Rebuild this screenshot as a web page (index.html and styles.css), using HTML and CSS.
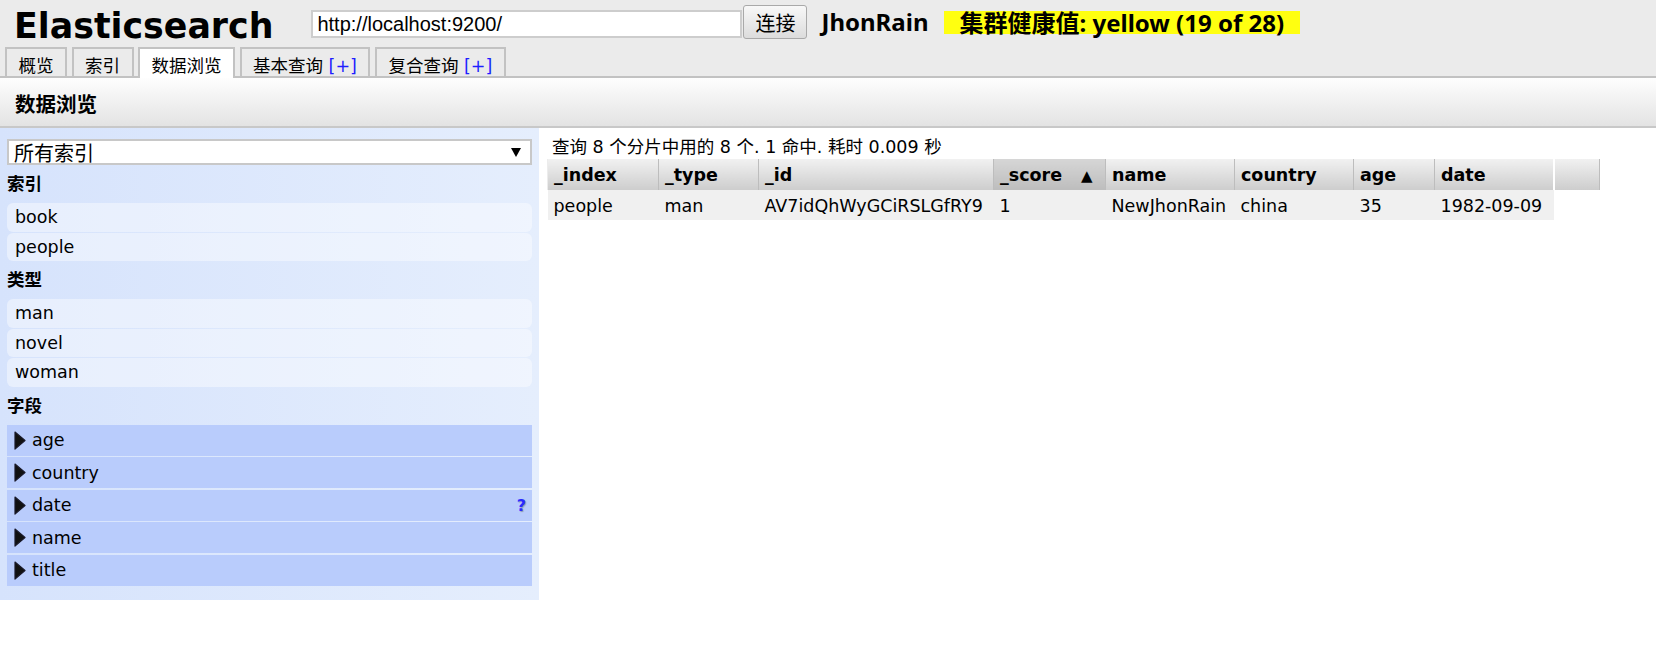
FILE: index.html
```html
<!DOCTYPE html>
<html lang="zh-CN">
<head>
<meta charset="utf-8">
<title>Elasticsearch</title>
<link rel="stylesheet" href="styles.css">
</head>
<body>
<header class="topbar">
  <div class="top-row">
    <h1 class="brand">Elasticsearch</h1>
    <input class="url" type="text" value="http://localhost:9200/">
    <button class="connect-btn" type="button">连接</button>
    <span class="cluster-name">JhonRain</span>
    <span class="health">集群健康值: yellow (19 of 28)</span>
  </div>
  <nav class="tabs">
    <div class="tab">概览</div>
    <div class="tab">索引</div>
    <div class="tab active">数据浏览</div>
    <div class="tab">基本查询 <span class="tab-plus">[+]</span></div>
    <div class="tab">复合查询 <span class="tab-plus">[+]</span></div>
  </nav>
</header>
<div class="page-head"><h2>数据浏览</h2></div>
<div class="browser">
  <aside class="filter">
    <div class="select" role="combobox"><span class="select-text">所有索引</span><svg class="select-arrow" width="10" height="10" viewBox="0 0 10 10"><polygon points="0,1 10,1 5,10" fill="#000"/></svg></div>
    <div class="section-title">索引</div>
    <div class="facet">book</div>
    <div class="facet">people</div>
    <div class="section-title">类型</div>
    <div class="facet">man</div>
    <div class="facet">novel</div>
    <div class="facet">woman</div>
    <div class="section-title">字段</div>
    <div class="field"><svg class="arrow" width="12" height="19" viewBox="0 0 12 19"><path d="M1 1 L11 9.5 L1 18 Z" fill="#111" stroke="#1a1a2a" stroke-width="1.2" stroke-linejoin="round"/></svg><span class="field-name">age</span></div>
    <div class="field"><svg class="arrow" width="12" height="19" viewBox="0 0 12 19"><path d="M1 1 L11 9.5 L1 18 Z" fill="#111" stroke="#1a1a2a" stroke-width="1.2" stroke-linejoin="round"/></svg><span class="field-name">country</span></div>
    <div class="field"><svg class="arrow" width="12" height="19" viewBox="0 0 12 19"><path d="M1 1 L11 9.5 L1 18 Z" fill="#111" stroke="#1a1a2a" stroke-width="1.2" stroke-linejoin="round"/></svg><span class="field-name">date</span><span class="help">?</span></div>
    <div class="field"><svg class="arrow" width="12" height="19" viewBox="0 0 12 19"><path d="M1 1 L11 9.5 L1 18 Z" fill="#111" stroke="#1a1a2a" stroke-width="1.2" stroke-linejoin="round"/></svg><span class="field-name">name</span></div>
    <div class="field"><svg class="arrow" width="12" height="19" viewBox="0 0 12 19"><path d="M1 1 L11 9.5 L1 18 Z" fill="#111" stroke="#1a1a2a" stroke-width="1.2" stroke-linejoin="round"/></svg><span class="field-name">title</span></div>
  </aside>
  <main class="results">
    <div class="summary">查询 8 个分片中用的 8 个. 1 命中. 耗时 0.009 秒</div>
    <table class="grid">
      <colgroup>
        <col class="c-index"><col class="c-type"><col class="c-id"><col class="c-score"><col class="c-name"><col class="c-country"><col class="c-age"><col class="c-date"><col class="c-extra">
      </colgroup>
      <thead>
        <tr>
          <th>_index</th><th>_type</th><th>_id</th><th class="sorted">_score<span class="sort">▲</span></th><th>name</th><th>country</th><th>age</th><th>date</th><th class="extra"></th>
        </tr>
      </thead>
      <tbody>
        <tr>
          <td>people</td><td>man</td><td>AV7idQhWyGCiRSLGfRY9</td><td>1</td><td>NewJhonRain</td><td>china</td><td>35</td><td>1982-09-09</td>
        </tr>
      </tbody>
    </table>
  </main>
</div>
</body>
</html>
```
FILE: styles.css
```css
* { box-sizing: border-box; }

body {
  margin: 0;
  font-family: "DejaVu Sans", "Noto Sans CJK SC", sans-serif;
  font-size: 17.5px;
  color: #000;
  background: #fff;
}

/* ---------- top bar ---------- */
.topbar {
  background: #ebebeb;
  border-bottom: 2px solid #c2c2c2;
  height: 78px;
}

.top-row {
  display: flex;
  align-items: flex-start;
  height: 47px;
}

.brand {
  margin: 6px 38px 0 14px;
  font-size: 34.8px;
  line-height: 40px;
  font-weight: bold;
  white-space: nowrap;
}

.url {
  margin-top: 10px;
  width: 431px;
  height: 28px;
  border: 2px solid #cdcdcd;
  padding: 0 4px;
  font: 20px "Liberation Sans", Arial, sans-serif;
  background: #fff;
  color: #000;
  outline: none;
}

.connect-btn {
  margin: 5px 0 0 1px;
  width: 64px;
  height: 34px;
  border: 1px solid #a9a9a9;
  border-radius: 3px;
  background: linear-gradient(#f8f8f8, #dcdcdc);
  font: 20px "Noto Sans CJK SC", sans-serif;
  padding: 0;
  color: #000;
}

.cluster-name {
  margin: 8px 0 0 14px;
  font: bold 24px/28px "Noto Sans", "Noto Sans CJK SC", sans-serif;
  white-space: nowrap;
}

.health {
  margin: 11px 0 0 16px;
  height: 23px;
  background: #ffff10;
  padding: 0 16px 0 15px;
  font: bold 24px/23px "Noto Sans", "Noto Sans CJK SC", sans-serif;
  white-space: nowrap;
}

/* ---------- tabs ---------- */
.tabs {
  display: flex;
  align-items: flex-end;
  gap: 4.5px;
  height: 29px;
  padding-left: 5px;
}

.tab {
  height: 29px;
  border: 2px solid #c2c2c2;
  border-bottom: 0;
  background: #ebebeb;
  padding: 7px 11.5px 0;
  line-height: 21px;
  font-size: 17.5px;
  white-space: nowrap;
}

.tab.active {
  background: #fff;
  height: 31px;
  margin-bottom: -2px;
}

.tab-plus { color: #1f1fff; }

/* ---------- page heading ---------- */
.page-head {
  height: 50px;
  background: linear-gradient(#fefefe, #e3e3e3);
  border-bottom: 2px solid #c8c8c8;
  padding: 1px 0 0 15px;
  display: flex;
  align-items: center;
}

.page-head h2 {
  margin: 0;
  font-size: 20.5px;
  font-weight: bold;
}

/* ---------- browser ---------- */
.browser {
  display: flex;
  align-items: flex-start;
}

.filter {
  width: 539px;
  flex: none;
  padding: 11px 7px 14.5px;
  background: linear-gradient(to right, #d6e3fc, #e5eefd);
}

.select {
  height: 26px;
  border: 2px solid #c8c8c8;
  background: #fff;
  display: flex;
  align-items: center;
  justify-content: space-between;
  padding: 0 9px 0 5px;
  font-size: 20px;
  overflow: hidden;
}

.select-text {
  line-height: 22px;
  padding-top: 3px;
}

.section-title {
  margin: 5px 0 5px;
  height: 28px;
  line-height: 28px;
  font-weight: bold;
  font-size: 17.5px;
}

.facet {
  height: 28.5px;
  line-height: 28.5px;
  padding-left: 8px;
  margin-bottom: 1px;
  background: rgba(255, 255, 255, 0.42);
  border-radius: 6px;
}

.field {
  height: 31px;
  margin-bottom: 1.6px;
  background: #b9ccfc;
  display: flex;
  align-items: center;
  padding: 0 6px 0 7px;
}

.field:last-child { margin-bottom: 0; }

.field .arrow {
  flex: none;
  margin-right: 6px;
}

.field-name { flex: 1; }

.help {
  color: #2a2aff;
  font-weight: bold;
  font-size: 16px;
  text-shadow: 1px 1px 1px #8f9ab5;
}

/* ---------- results ---------- */
.results {
  flex: 1;
  padding: 9px 0 0 8px;
}

.summary {
  margin: 0 0 2px 5px;
  line-height: 20px;
  white-space: nowrap;
}

.grid {
  border-collapse: collapse;
  table-layout: fixed;
  width: 1052px;
}

.c-index { width: 111px; }
.c-type { width: 100px; }
.c-id { width: 235px; }
.c-score { width: 112px; }
.c-name { width: 129px; }
.c-country { width: 119px; }
.c-age { width: 81px; }
.c-date { width: 119px; }
.c-extra { width: 46px; }

.grid th {
  height: 31px;
  padding: 1px 6px 0;
  text-align: left;
  font-weight: bold;
  white-space: nowrap;
  background: linear-gradient(#f1f1f1, #cdcdcd);
  border-left: 1px solid #ececec;
  border-right: 1px solid #bdbdbd;
}

.grid th.sorted {
  background: linear-gradient(#d6d6d6, #bdbdbd);
}

.grid th.extra {
  border-left: 2px solid #fff;
}

.sort {
  padding-left: 19px;
  font-size: 15px;
}

.grid td {
  height: 30px;
  padding: 1px 6px 0;
  background: #f0f0f0;
  white-space: nowrap;
}
```
